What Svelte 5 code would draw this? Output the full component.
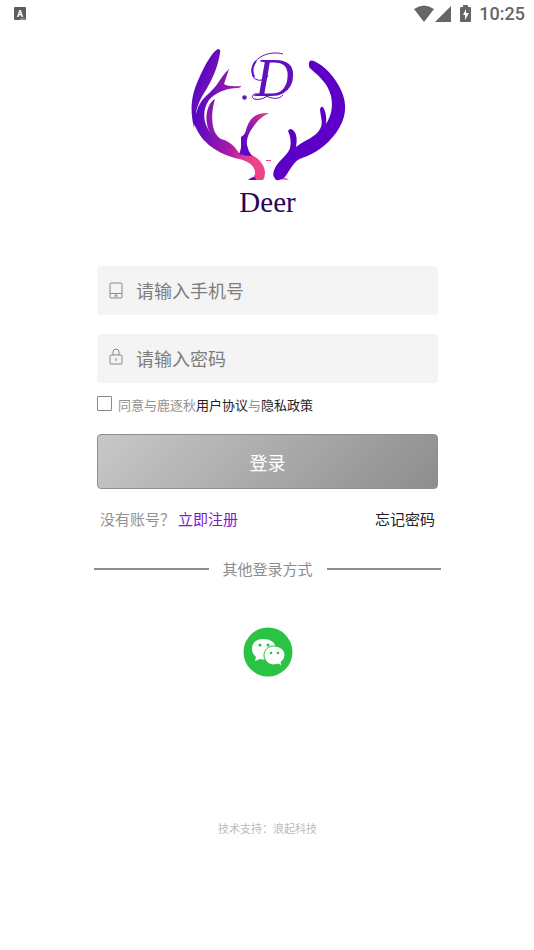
<script>
  let phone = $state('');
  let password = $state('');
  let agreed = $state(false);

  function login(event) {
    event.preventDefault();
  }
</script>

<div class="status-bar">
  <svg class="app-icon" viewBox="0 0 12 14" aria-hidden="true">
    <rect width="12" height="13" rx="1" fill="#5c5c5c"/>
    <text x="6" y="10" text-anchor="middle" font-size="9" font-weight="700" fill="#fff">A</text>
    <path d="M6 12h5" stroke="#bbb" stroke-width="1"/>
  </svg>
  <div class="status-right">
    <svg class="signals" viewBox="0 0 58 18" fill="#666" aria-hidden="true">
      <path d="M0 4Q10 -3 20 4L10 17Z"/>
      <path d="M37 1V17H21Z"/>
      <path d="M49 0h5v2h2q1 0 1 1v13q0 1-1 1h-9q-1 0-1-1V3q0-1 1-1h2Z"/>
      <path d="M52 4l-3 6h2v5l4-7h-3Z" fill="#fff"/>
    </svg>
    <span class="clock">10:25</span>
  </div>
</div>

<main>
  <div class="logo">
    <svg viewBox="187 46 160 136" aria-hidden="true">
      <defs>
        <linearGradient id="antler" gradientUnits="userSpaceOnUse" x1="194" y1="110" x2="260" y2="120">
          <stop offset="0" stop-color="#5505c4"/>
          <stop offset="0.2" stop-color="#6e0ebc"/>
          <stop offset="0.6" stop-color="#a81ca6"/>
          <stop offset="0.82" stop-color="#dc3596"/>
          <stop offset="1" stop-color="#ee4289"/>
        </linearGradient>
        <linearGradient id="prong" gradientUnits="userSpaceOnUse" x1="198" y1="75" x2="222" y2="85">
          <stop offset="0" stop-color="#5706c6"/>
          <stop offset="0.5" stop-color="#7310b8"/>
          <stop offset="1" stop-color="#981aa5"/>
        </linearGradient>
        <linearGradient id="brow" gradientUnits="userSpaceOnUse" x1="241" y1="142" x2="268" y2="113">
          <stop offset="0" stop-color="#5908c5"/>
          <stop offset="0.5" stop-color="#951aab"/>
          <stop offset="1" stop-color="#ee4188"/>
        </linearGradient>
      </defs>
      <path fill="url(#prong)" d="M217 49Q220 49 219 53C217 67 211 80 205 90C199 99 195 108 195 116L193 128C188 106 191 93 199 76C205 63 212 51 217 49Z"/>
      <path fill="url(#antler)" d="M228 69L223 84Q227 87 240 86Q240 88 235 88C223 89 214 93 208 100C202 109 202 119 206 127Q209 134 216 138C227 140 233 145 238 153Q243 156 248 154C257 157 264 165 264 173Q264 177 262 180H247Q253 178 254 174C255 166 247 161 238 159C221 155 203 146 195 128Q190 119 192 107L195 114C197 106 200 101 205 96Q213 89 217 83C220 78 223 74 228 69Z"/>
      <path fill="#8716b2" d="M214 99C211 109 210 120 213 130Q215 136 222 141Q216 140 212 136C203 128 203 105 214 99Z"/>
      <path fill="url(#brow)" d="M268 113Q260 117 256 122C250 129 245 137 246 145Q247 151 251 156Q244 156 238 154Q241 149 240 137Q244 135 245 130C248 120 253 112 268 113Z"/>
      <path fill="#5e08c4" d="M240 137Q243 137 244 134Q244 149 249 155L239 154Q241 149 240 137Z"/>
      <path fill="#5a05c8" d="M247 180Q250 177 254 177L255 180Z"/>
      <path fill="#e1478d" d="M265 160h5v1h-5ZM277 179Q283 176 288 180Z"/>
      <path fill="#5c00c7" d="M308 66Q307 59 313 61C324 66 334 77 340 90C347 105 345 119 335 133C326 145 314 154 301 158C293 160 288 172 284 177Q280 181 275 180Q270 175 274 168C278 160 287 155 289 148Q291 139 287 131Q289 127 293 131Q297 136 295 147C304 140 315 137 319 129C323 123 319 115 319 109Q321 104 323 109Q326 115 325 124C331 115 332 105 330 96C327 84 319 77 311 70Q308 68 308 66Z"/>
      <circle cx="243.500" cy="97.500" r="2.300" fill="#6818b8"/>
      <text class="monogram" x="254" y="96">D</text>
      <path fill="none" stroke="#6010bd" stroke-width="1" d="M282 54C268 50 250 58 251 72Q252 82 262 80Q267 78 267 75M282 95C274 104 262 92 254 94Q249 96 253 99Q261 101 269 94"/>
      <path fill="none" stroke="#6010bd" stroke-width="2" d="M255 61Q249 69 253 77"/>
    </svg>
    <h1>Deer</h1>
  </div>

  <form onsubmit={login}>
    <label class="field">
      <svg viewBox="0 0 14 18" fill="none" stroke="#888" aria-hidden="true">
        <rect x="1" y="1" width="12" height="15" rx="1"/>
        <path d="M1 11.500h12M5 14h4M7 12v2"/>
      </svg>
      <input type="tel" placeholder="请输入手机号" aria-label="手机号" bind:value={phone}/>
    </label>
    <label class="field">
      <svg class="lock" viewBox="0 0 14 18" fill="none" stroke="#888" aria-hidden="true">
        <rect x="1" y="7" width="12" height="9" rx="1"/>
        <path d="M4 7V4a3 3 0 0 1 6 0v3M7 10v3"/>
      </svg>
      <input type="password" placeholder="请输入密码" aria-label="密码" bind:value={password}/>
    </label>

    <div class="agreement">
      <input id="agree" type="checkbox" bind:checked={agreed}/>
      <label for="agree">同意与鹿逐秋<a href="#terms">用户协议</a>与<a href="#privacy">隐私政策</a></label>
    </div>

    <button class="login-btn" type="submit">登录</button>

    <div class="links">
      <div class="signup">
        <span>没有账号？</span>
        <a class="register" href="#register">立即注册</a>
      </div>
      <a href="#forgot">忘记密码</a>
    </div>
  </form>

  <div class="divider"><span>其他登录方式</span></div>

  <button class="wechat" type="button" aria-label="微信登录">
    <svg viewBox="0 0 50 50" aria-hidden="true">
      <circle cx="25" cy="25" r="24.500" fill="#2bc344"/>
      <path fill="#fff" d="M20 12C13 12 9 16 9 22C9 26 11 28 13 30L12 34L17 32Q20 33 23 32L33 21C32 15 27 12 20 12Z"/>
      <path fill="#fff" stroke="#2bc344" d="M31 19C25 19 21 23 21 28C21 34 26 38 31 38L35 37L39 39L38 35C40 33 42 31 42 28C42 23 37 19 31 19Z"/>
      <g fill="#2bc344">
        <circle cx="17" cy="18" r="1.600"/>
        <circle cx="25" cy="18" r="1.600"/>
        <circle cx="28" cy="26" r="1.300"/>
        <circle cx="35" cy="26" r="1.300"/>
      </g>
    </svg>
  </button>

  <footer>技术支持：浪起科技</footer>
</main>

<style>
  :global(body) {
    background: #fff;
    font-family: "Noto Sans CJK SC", "Noto Sans", sans-serif;
  }

  .status-bar {
    display: flex;
    align-items: center;
    justify-content: space-between;
    height: 28px;
    padding: 0 9px 0 14px;
    font-family: Roboto, sans-serif;
  }

  .app-icon {
    width: 12px;
    height: 14px;
  }

  .status-right {
    display: flex;
    align-items: center;
    gap: 7px;
  }

  .signals {
    width: 58px;
    height: 18px;
  }

  .clock {
    color: #666;
    font-size: 18px;
    font-weight: 500;
    line-height: 28px;
  }

  main {
    display: flex;
    flex-direction: column;
    padding: 18px 96px 0 97px;
  }

  .logo {
    display: flex;
    flex-direction: column;
    align-items: center;
    margin-bottom: 48px;
  }

  .logo svg {
    width: 160px;
    height: 136px;
  }

  .monogram {
    fill: #6010bd;
    font-family: "Liberation Serif", serif;
    font-size: 54px;
    font-style: italic;
  }

  h1 {
    margin: 4px 0 0;
    color: #280659;
    font-family: "Liberation Serif", serif;
    font-size: 29px;
    font-weight: 400;
    line-height: 32px;
  }

  form {
    display: flex;
    flex-direction: column;
  }

  .field {
    display: flex;
    align-items: center;
    gap: 13px;
    height: 49px;
    margin-bottom: 19px;
    padding: 0 12px;
    border-radius: 4px;
    background: #f4f4f4;
  }

  .field svg {
    width: 14px;
    height: 18px;
    flex-shrink: 0;
  }

  .field .lock {
    margin-bottom: 4px;
  }

  .field input {
    flex: 1;
    min-width: 0;
    padding: 0 0 2px;
    border: 0;
    outline: 0;
    background: transparent;
    color: #333;
    font-family: inherit;
    font-size: 18px;
    line-height: 28px;
  }

  .field input::placeholder {
    color: #7d7d7d;
  }

  .agreement {
    display: flex;
    align-items: center;
    gap: 6px;
    margin: -7px 0 19px;
    color: #929292;
    font-size: 13px;
    line-height: 20px;
  }

  .agreement input {
    appearance: none;
    width: 15px;
    height: 15px;
    margin: 0 0 4px;
    border: 1px solid #888;
    border-radius: 1px;
  }

  .agreement input:checked {
    background: #8a26d2;
  }

  a {
    color: #222;
    text-decoration: none;
  }

  .login-btn {
    height: 55px;
    border: 1px solid #8e8e8e;
    border-radius: 4px;
    background: linear-gradient(135deg, #c8c8c8, #8d8d8d);
    color: #fff;
    font-family: inherit;
    font-size: 18px;
    cursor: pointer;
  }

  .links {
    display: flex;
    justify-content: space-between;
    margin-top: 18px;
    padding: 0 3px;
    color: #929292;
    font-size: 15px;
    line-height: 24px;
  }

  .signup {
    display: flex;
    gap: 3px;
  }

  .links .register {
    color: #7d19cc;
  }

  .divider {
    display: flex;
    align-items: center;
    gap: 14px;
    margin: 26px -3px 0;
    color: #8d8d8d;
    font-size: 15px;
    line-height: 24px;
  }

  .divider::before,
  .divider::after {
    content: "";
    flex: 1;
    height: 2px;
    background: #8d8d8d;
  }

  .wechat {
    align-self: center;
    width: 50px;
    height: 50px;
    margin-top: 46px;
    padding: 0;
    border: 0;
    border-radius: 50%;
    background: none;
    cursor: pointer;
  }

  .wechat svg {
    display: block;
  }

  footer {
    margin-top: 142px;
    color: #bababa;
    font-size: 11px;
    line-height: 18px;
    text-align: center;
  }
</style>
